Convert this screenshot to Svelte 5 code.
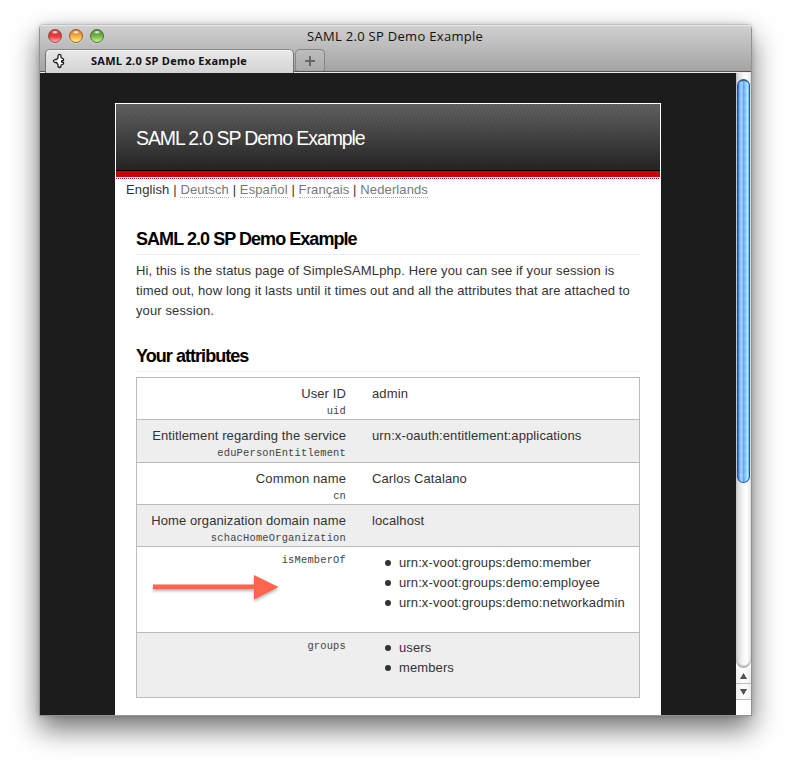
<script>
  const languages = ['Deutsch', 'Español', 'Français', 'Nederlands'];
  const rows = [
    { name: 'User ID', key: 'uid', value: 'admin', h: 42 },
    { name: 'Entitlement regarding the service', key: 'eduPersonEntitlement', value: 'urn:x-oauth:entitlement:applications', h: 43 },
    { name: 'Common name', key: 'cn', value: 'Carlos Catalano', h: 42 },
    { name: 'Home organization domain name', key: 'schacHomeOrganization', value: 'localhost', h: 42 },
    { key: 'isMemberOf', h: 86, arrow: true, list: ['urn:x-voot:groups:demo:member', 'urn:x-voot:groups:demo:employee', 'urn:x-voot:groups:demo:networkadmin'] },
    { key: 'groups', h: 64, list: ['users', 'members'] }
  ];
</script>

<div class="desktop">
  <div class="window">
    <header class="chrome">
      <div class="titlebar">
        <div class="lights">
          <span class="light red"></span><span class="light amber"></span><span class="light green"></span>
        </div>
        <span class="title">SAML 2.0 SP Demo Example</span>
      </div>
      <div class="tabs">
        <div class="tab">
          <svg class="favicon" width="14" height="16" viewBox="0 0 14 16">
            <path d="M6 5V2.500Q7.500 .3 9 2.500V4.500L11.500 6V7.500Q9.300 7.500 9.300 8.500T11.500 9.500V11L9 12V13.500Q7.500 15.500 6 13.500V11.500L4.500 9.500H3Q-.2 8 3 6.500H4.500z" fill="#fff" stroke="#1c1c1c" stroke-width="1.300" stroke-linejoin="round" />
          </svg>
          <span class="tabname">SAML 2.0 SP Demo Example</span>
        </div>
        <div class="plus">
          <svg width="12" height="12" viewBox="0 0 12 12"><path d="M6 1v10M1 6h10" stroke="#666" stroke-width="2" /></svg>
        </div>
      </div>
    </header>
    <div class="content">
      <main>
        <div class="page">
          <div class="banner"><span>SAML 2.0 SP Demo Example</span></div>
          <div class="redline"></div>
          <div class="dots"></div>
          <nav>English{#each languages as l}{' | '}<a href="#top">{l}</a>{/each}</nav>
          <section>
            <h2>SAML 2.0 SP Demo Example</h2>
            <p>Hi, this is the status page of SimpleSAMLphp. Here you can see if your session is<br />timed out, how long it lasts until it times out and all the attributes that are attached to<br />your session.</p>
            <h2 class="second">Your attributes</h2>
            <div class="table">
              {#each rows as r, i}
                <div class="row" class:alt={i % 2 === 1} style:height="{r.h}px">
                  <div class="label">
                    {#if r.name}<span>{r.name}</span>{/if}
                    <code>{r.key}</code>
                    {#if r.arrow}
                      <svg class="arrow" width="130" height="32" viewBox="0 0 130 32">
                        <path d="M2 12.500h101V3l24.500 12L103 27.500V17H2z" fill="#ff644c" />
                      </svg>
                    {/if}
                  </div>
                  <div class="value">
                    {#if r.list}
                      <ul>{#each r.list as item}<li>{item}</li>{/each}</ul>
                    {:else}{r.value}{/if}
                  </div>
                </div>
              {/each}
            </div>
          </section>
        </div>
      </main>
      <aside>
        <div class="track"><div class="thumb"></div></div>
        <div class="step"><svg width="7" height="6" viewBox="0 0 7 6"><path d="M3.500 0L7 6H0z" fill="#505050" /></svg></div>
        <div class="step"><svg width="7" height="6" viewBox="0 0 7 6"><path d="M0 0h7L3.500 6z" fill="#505050" /></svg></div>
        <div class="corner"></div>
      </aside>
    </div>
  </div>
</div>

<style>
  :global(body) { background: #fff; }
  .desktop { box-sizing: border-box; width: 791px; height: 770px; padding: 24px 0 0 39px; overflow: hidden; font-family: "Liberation Sans", Arial, sans-serif; }
  .window { box-sizing: border-box; width: 713px; height: 692px; border: 1px solid #929292; border-top-color: #c0c0c0; border-radius: 5px 5px 0 0; box-shadow: 0 13px 28px rgba(0,0,0,.56), 0 0 5px rgba(0,0,0,.16); }
  .chrome { height: 48px; box-sizing: border-box; border-radius: 4px 4px 0 0; background: linear-gradient(#d0d0d0, #a2a2a2); border-top: 1px solid #e9e9e9; border-bottom: 1px solid #eee; box-shadow: inset 0 -1px #555; font-family: "Lucida Grande", "Open Sans", sans-serif; }
  .titlebar { box-sizing: border-box; height: 23px; display: flex; align-items: flex-start; padding-top: 3px; }
  .lights { display: flex; gap: 7px; padding-left: 8px; }
  .light { width: 14px; height: 14px; box-sizing: border-box; border-radius: 50%; border: 1px solid #8c4b47; box-shadow: 0 1px #d5d5d5; }
  .red { background: radial-gradient(ellipse 4px 2px at 50% 18%, #fff, transparent), linear-gradient(#c3312e, #f23b3b 55%, #ffb5b5); }
  .amber { border-color: #94602e; background: radial-gradient(ellipse 4px 2px at 50% 18%, #fff, transparent), linear-gradient(#d27021, #f9b044 55%, #fff391); }
  .green { border-color: #4c7232; background: radial-gradient(ellipse 4px 2px at 50% 18%, #fff, transparent), linear-gradient(#43811e, #7cba4b 55%, #c9f394); }
  .title { flex: 1; padding-left: 203px; margin-top: -3px; font-size: 13px; line-height: 20px; color: #111; letter-spacing: .3px; white-space: nowrap; }
  .tabs { display: flex; height: 23px; padding-left: 5px; gap: 1px; }
  .tab { box-sizing: border-box; width: 249px; height: 24px; display: flex; align-items: center; background: linear-gradient(#e8e8e8, #d4d4d4); border: 1px solid #737373; border-top-color: #8a8a8a; border-bottom: 0; border-radius: 5px 5px 0 0; box-shadow: inset 0 1px #f5f5f5; }
  .favicon { margin: -1px 0 0 6px; }
  .tabname { margin: -2px 0 0 25px; font-weight: 700; font-size: 11px; line-height: 16px; letter-spacing: .28px; color: #111; white-space: nowrap; }
  .plus { box-sizing: border-box; width: 30px; height: 23px; display: flex; align-items: center; justify-content: center; border: 1px solid #858585; border-bottom-color: #555; border-radius: 5px 5px 3px 3px; background: linear-gradient(#bcbcbc, #aaa); }
  .content { display: flex; height: 642px; background: #1c1c1c; }
  main { width: 696px; height: 642px; overflow: hidden; padding-top: 30px; box-sizing: border-box; }
  .page { width: 546px; height: 612px; margin-left: 75px; background: #fff; box-sizing: border-box; padding: 1px 1px 0; color: #333; letter-spacing: .115px; }
  .banner { height: 67px; box-sizing: border-box; border-bottom: 1px solid #000; background: repeating-linear-gradient(70deg, rgba(0,0,0,.07) 0 1px, transparent 1px 3px), linear-gradient(#616161, #242424); color: #fff; font-size: 19.5px; letter-spacing: -1.09px; padding: 23px 0 0 20px; line-height: 23px; white-space: nowrap; }
  .redline { height: 6px; background: #c00; }
  .dots { height: 1px; margin-top: 1px; background: repeating-linear-gradient(90deg, #9a1b1b 0 1px, #fff 1px 2px); }
  nav { font-size: 13px; line-height: 16px; padding: 3px 0 0 10px; height: 32px; white-space: pre; }
  nav a { color: #777; text-decoration: none; border-bottom: 1px dotted #aaa; }
  section { padding: 0 20px; }
  h2 { margin: 0; height: 41px; box-sizing: border-box; padding-top: 15px; line-height: 20px; border-bottom: 1px solid #eee; color: #000; font-size: 18px; letter-spacing: -.95px; white-space: nowrap; }
  p { margin: 6px 0 0; font-size: 13px; line-height: 20px; white-space: nowrap; }
  .second { margin-top: 10px; }
  .table { margin-top: 5px; border: 1px solid #bbb; width: 504px; box-sizing: border-box; font-size: 13px; }
  .row { display: flex; box-sizing: border-box; border-bottom: 1px solid #bbb; }
  .row:last-child { border-bottom: 0; }
  .row:last-child .value { padding-top: 5px; }
  .alt { background: #eee; }
  .label { width: 209px; padding-top: 6px; display: flex; flex-direction: column; align-items: flex-end; position: relative; line-height: 20px; }
  code { font: 10.4px/14px "Liberation Mono", "Courier New", monospace; letter-spacing: .2px; color: #444; }
  .arrow { position: absolute; left: 13.5px; top: 25px; filter: drop-shadow(0 2px 1.5px rgba(0,0,0,.3)); }
  .value { padding: 6px 0 0 26px; line-height: 20px; white-space: nowrap; }
  ul { margin: 0; padding: 0 0 0 27px; list-style: none; }
  li { position: relative; }
  li::before { content: ''; position: absolute; left: -14px; top: 7px; width: 6px; height: 6px; border-radius: 50%; background: #333; }
  aside { width: 15px; height: 642px; display: flex; flex-direction: column; background: #fff; }
  .track { height: 595px; box-sizing: border-box; padding: 6px 1px 0; border-radius: 0 0 8px 8px; background: linear-gradient(90deg, #ccc, #eee 35%, #fff 65%, #eee); box-shadow: inset 0 -2px 2px #aaa; }
  .thumb { height: 404px; box-sizing: border-box; border: 1px solid #1a50a8; border-top: 2px solid #355b84; border-radius: 7px; background: repeating-linear-gradient(rgba(255,255,255,.08) 0 4px, transparent 4px 8px), linear-gradient(90deg, #2767cf, #a6cffa 25%, #8fc3fb 40%, #54a7f4 50%, #86ccff 70%, #b4efff 90%, #579de5); }
  .step { height: 16px; box-sizing: border-box; border-bottom: 1px solid #bbb; display: flex; align-items: center; justify-content: center; background: linear-gradient(90deg, #eee, #fff, #eee); }
  .corner { flex: 1; background: #fff; }
</style>
